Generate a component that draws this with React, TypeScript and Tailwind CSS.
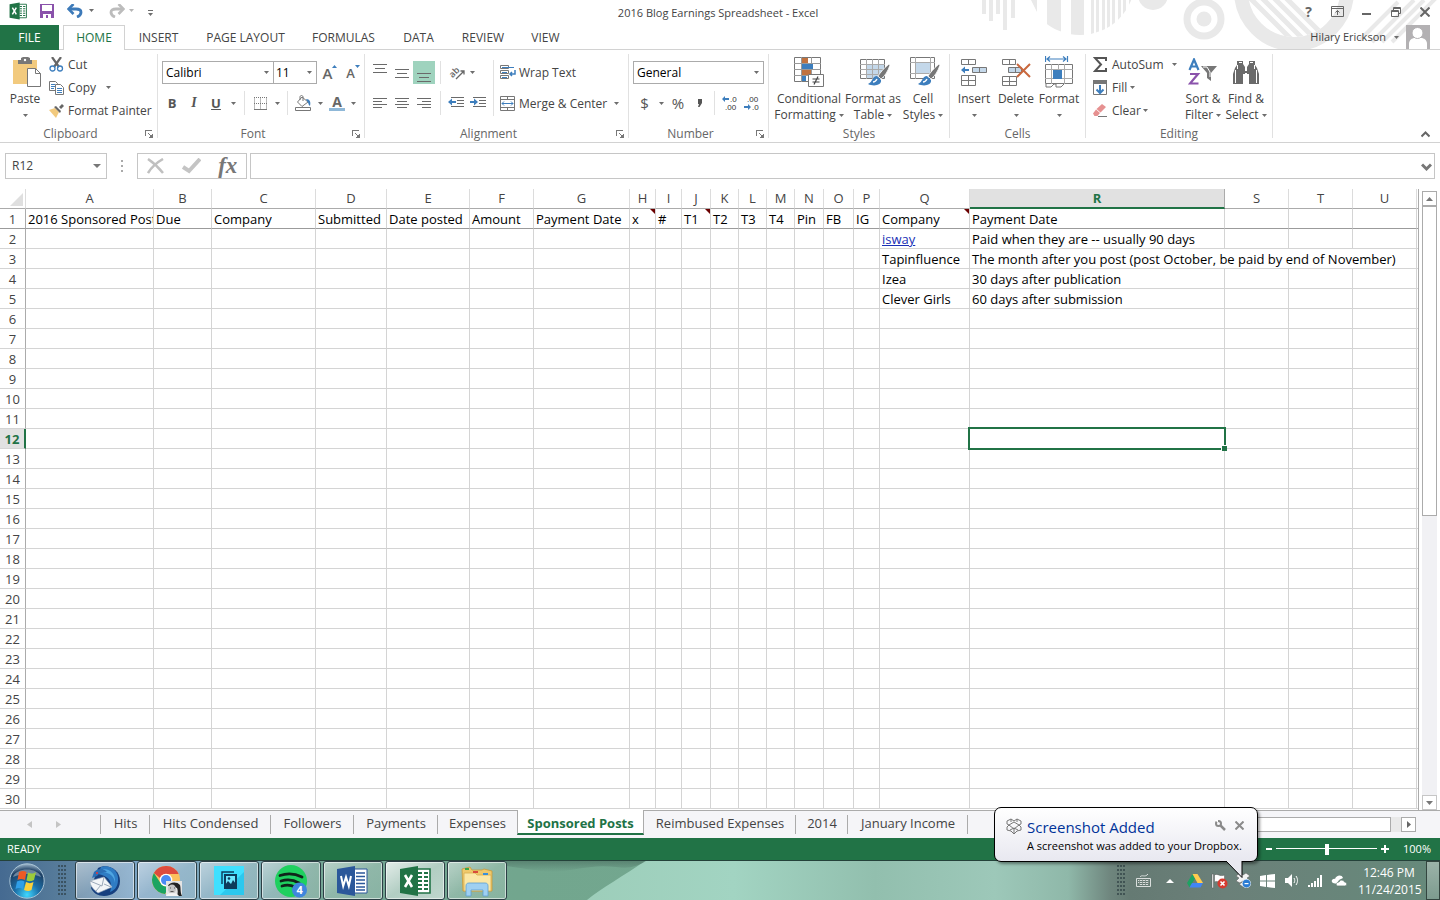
import React from "react";

const COLUMNS = [
  { name: "A", width: 128 },
  { name: "B", width: 58 },
  { name: "C", width: 104 },
  { name: "D", width: 71 },
  { name: "E", width: 83 },
  { name: "F", width: 64 },
  { name: "G", width: 96 },
  { name: "H", width: 26 },
  { name: "I", width: 26 },
  { name: "J", width: 29 },
  { name: "K", width: 28 },
  { name: "L", width: 28 },
  { name: "M", width: 28 },
  { name: "N", width: 29 },
  { name: "O", width: 30 },
  { name: "P", width: 26 },
  { name: "Q", width: 90 },
  { name: "R", width: 255 },
  { name: "S", width: 64 },
  { name: "T", width: 64 },
  { name: "U", width: 64 },
];

const CELLS: Record<string, string> = {
  A1: "2016 Sponsored Post",
  B1: "Due",
  C1: "Company",
  D1: "Submitted",
  E1: "Date posted",
  F1: "Amount",
  G1: "Payment Date",
  H1: "x",
  I1: "#",
  J1: "T1",
  K1: "T2",
  L1: "T3",
  M1: "T4",
  N1: "Pin",
  O1: "FB",
  P1: "IG",
  Q1: "Company",
  R1: "Payment Date",
  Q2: "isway",
  R2: "Paid when they are -- usually 90 days",
  Q3: "Tapinfluence",
  R3: "The month after you post (post October, be paid by end of November)",
  Q4: "Izea",
  R4: "30 days after publication",
  Q5: "Clever Girls",
  R5: "60 days after submission",
};

const COMMENTS = ["H1", "J1", "Q1"];

function Arrow({ className = "" }: { className?: string }) {
  return (
    <svg width="5" height="3" viewBox="0 0 5 3" className={`shrink-0 ${className}`} aria-hidden="true">
      <path d="M0 0h5L2.5 3z" fill="#6d6d6d" />
    </svg>
  );
}

function Sep({ className = "" }: { className?: string }) {
  return (
    <span className={`flex justify-center ${className}`}>
      <span className="h-full w-px bg-[#e1e1e1]" />
    </span>
  );
}

function Btn({
  label,
  className = "",
  children,
}: {
  label?: string;
  className?: string;
  children: React.ReactNode;
}) {
  return (
    <button type="button" aria-label={label} className={`flex items-center justify-center ${className}`}>
      {children}
    </button>
  );
}

function Launcher() {
  return (
    <svg width="8" height="8" viewBox="0 0 8 8" aria-hidden="true" fill="none" stroke="#777" shapeRendering="crispEdges">
      <path d="M.5 6V.5H7M3 3l3 3M7.5 3.5v4h-4" />
      <path d="M4 7h4V4z" fill="#777" stroke="none" />
    </svg>
  );
}

function Group({
  title,
  width,
  launcher = false,
  children,
}: {
  title: string;
  width: string;
  launcher?: boolean;
  children: React.ReactNode;
}) {
  return (
    <section className={`flex shrink-0 flex-col ${width}`} aria-label={title}>
      <div className="flex h-[72px]">{children}</div>
      <div className="flex h-4 items-center text-[#666]">
        <span className="flex-1 text-center">{title}</span>
        {launcher && (
          <button type="button" aria-label={`${title} settings`} className="flex w-4 justify-center">
            <Launcher />
          </button>
        )}
      </div>
    </section>
  );
}

function GroupEdge() {
  return <span className="mb-1 w-px shrink-0 bg-[#e1e1e1]" />;
}

function BigBtn({
  lines,
  width,
  icon,
}: {
  lines: string[];
  width: string;
  icon: React.ReactNode;
}) {
  return (
    <button type="button" className={`flex shrink-0 flex-col items-center whitespace-nowrap leading-4 ${width}`}>
      <span className="flex h-[37px] items-center justify-center pb-px">{icon}</span>
      <span>{lines[0]}</span>
      <span className="flex h-4 items-center gap-[3px]">
        {lines[1]}
        <Arrow />
      </span>
    </button>
  );
}

function SmallBtn({ icon, text, arrow = "" }: { icon: React.ReactNode; text: string; arrow?: string }) {
  return (
    <button type="button" className="flex h-[23px] items-center whitespace-nowrap">
      <span className="flex w-[19px] items-center">{icon}</span>
      {text}
      {arrow && <Arrow className={arrow} />}
    </button>
  );
}

function Lines({ rows }: { rows: [number, number, number][] }) {
  return (
    <svg width="14" height="14" viewBox="0 0 14 14" aria-hidden="true" shapeRendering="crispEdges">
      {rows.map(([x, y, w]) => (
        <rect key={y} x={x} y={y} width={w} height="1" fill="#6a6a6a" />
      ))}
    </svg>
  );
}

function ExcelMark({ size }: { size: number }) {
  return (
    <svg width={size} height={size} viewBox="0 0 32 32" aria-hidden="true">
      <path d="M17 4h14v24H17z" fill="#fff" stroke="#217346" strokeWidth="1.6" />
      <path d="M19 8h4M19 12h4M19 16h4M19 20h4M19 24h4M25 8h4M25 12h4M25 16h4M25 20h4M25 24h4" stroke="#217346" strokeWidth="2" />
      <path d="M1 4 19 1v30L1 28z" fill="#217346" />
      <path d="M6 10l7 12M13 10 6 22" stroke="#fff" strokeWidth="2.6" />
    </svg>
  );
}

function WordMark() {
  return (
    <svg width="32" height="32" viewBox="0 0 32 32" aria-hidden="true">
      <path d="M17 4h13v24H17z" fill="#fff" stroke="#2b579a" />
      <path d="M19 8h9M19 11.500h9M19 15h9M19 18.500h9M19 22h9M19 25h9" stroke="#2b579a" strokeWidth="1.400" />
      <path d="M0 4 18 1v30L0 28z" fill="#2b579a" />
      <path d="M4 11l2.200 10L9 12l2.800 9L14 11" stroke="#fff" strokeWidth="2" fill="none" />
    </svg>
  );
}

function HeaderArt() {
  return (
    <svg
      width="460"
      height="49"
      viewBox="980 0 460 49"
      className="pointer-events-none absolute right-0 top-0"
      aria-hidden="true"
    >
      <defs>
        <clipPath id="disc">
          <circle cx="1080" cy="-20" r="55" />
        </clipPath>
        <clipPath id="ring">
          <circle cx="1294" cy="-9" r="46" />
        </clipPath>
      </defs>
      <g fill="#e9e9e9">
        <path d="M982 0h4v14h-4zM989 0h4v21h-4zM996 0h4v14h-4zM1003 0h4v30h-4zM1011 0h4v18h-4zM1031 0h6v12z" />
        <g clipPath="url(#disc)">
          <path d="M1047 0h14v40h-14zM1071 0h13v40h-13zM1091 0h3v40h-3zM1096 0h3v40h-3zM1102 0h3v40h-3zM1107 0h3v40h-3zM1112 0h3v40h-3zM1118 0h3v40h-3zM1123 0h3v40h-3zM1129 0h3v40h-3z" />
        </g>
        <circle cx="1153" cy="-5" r="15" />
        <circle cx="1204" cy="19" r="7.500" />
      </g>
      <circle cx="1204" cy="19" r="17" fill="none" stroke="#e9e9e9" strokeWidth="7" />
      <circle cx="1294" cy="-9" r="53" fill="none" stroke="#e9e9e9" strokeWidth="14" />
      <g clipPath="url(#ring)" stroke="#e9e9e9" strokeWidth="5">
        <path d="M1240-12l62 62M1252-12l62 62M1264-12l62 62M1276-12l62 62" />
      </g>
      <g stroke="#e9e9e9" strokeWidth="4">
        <path d="M1372 42l42-42M1382 42l42-42M1360 40l38-38M1392 42l44-44" />
      </g>
    </svg>
  );
}

function TitleBar() {
  return (
    <header className="relative">
      <HeaderArt />
      <div className="relative flex h-[25px] items-center">
        <div className="flex flex-1 items-center">
          <span className="ml-[9px] mt-[-3px] w-[31px]">
            <ExcelMark size={18} />
          </span>
          <Btn label="Save" className="w-[14px]">
            <svg width="14" height="14" viewBox="0 0 14 14" aria-hidden="true" className="mt-[-3px]">
              <path d="M0 0h14v14H0z" fill="#8a52ab" />
              <path d="M2 1h10v6H2zM3 10h8v4H8v-3H6v3H3z" fill="#fff" />
            </svg>
          </Btn>
          <Btn label="Undo" className="ml-3 w-[17px]">
            <svg width="16" height="14" viewBox="0 0 16 14" fill="none" stroke="#3d7ab9" aria-hidden="true" className="mt-[-3px]">
              <path d="M2 5h7c7 0 6 6 1 8" strokeWidth="2.800" />
              <path d="M6.500 0L1.500 5l5 5" strokeWidth="2.600" />
            </svg>
          </Btn>
          <Btn label="Undo list" className="ml-[6px]"><Arrow className="mb-1" /></Btn>
          <Btn label="Redo" className="ml-[14px] w-[17px]">
            <svg width="16" height="14" viewBox="0 0 16 14" fill="none" stroke="#bcbcbc" aria-hidden="true" className="mt-[-3px]">
              <path d="M14 5H7C0 5 1 11 6 13" strokeWidth="2.800" />
              <path d="M9.500 0l5 5-5 5" strokeWidth="2.600" />
            </svg>
          </Btn>
          <Btn label="Redo list" className="ml-1 opacity-50"><Arrow className="mb-1" /></Btn>
          <Btn label="Customize toolbar" className="ml-[14px] flex-col gap-[2px]">
            <span className="h-px w-[5px] bg-[#6d6d6d]" />
            <Arrow />
          </Btn>
        </div>
        <h1 className="pl-1 text-[11px] text-[#444]">2016 Blog Earnings Spreadsheet - Excel</h1>
        <div className="flex flex-1 items-center justify-end pb-[2px] pr-2">
          <Btn label="Help" className="w-[29px] text-[14px] font-bold text-[#666]">?</Btn>
          <Btn label="Ribbon display options" className="w-[29px]">
            <svg width="13" height="11" viewBox="0 0 13 11" fill="none" stroke="#666" aria-hidden="true">
              <path d="M.5.5h12v10H.5zM.5 2.500h12M6.500 9V4.500M4.500 6.500l2-2 2 2" />
            </svg>
          </Btn>
          <Btn label="Minimize" className="w-[29px]">
            <svg width="9" height="10" viewBox="0 0 9 10" aria-hidden="true"><path d="M0 6h9v2H0z" fill="#666" /></svg>
          </Btn>
          <Btn label="Restore" className="w-[30px]">
            <svg width="10" height="10" viewBox="0 0 10 10" fill="none" stroke="#666" aria-hidden="true">
              <path d="M.5 3.500h7v6h-7zM.5 4.500h7M2.500 3V.5h7v6H8M2.500 1.500h7" />
            </svg>
          </Btn>
          <Btn label="Close" className="ml-[7px] w-[14px]">
            <svg width="10" height="10" viewBox="0 0 10 10" fill="none" stroke="#666" strokeWidth="2" aria-hidden="true">
              <path d="M.5.5l9 9M9.500.5l-9 9" />
            </svg>
          </Btn>
        </div>
      </div>
      <div className="relative flex h-[25px] items-stretch border-b border-[#d2d2d2] text-[#444]">
        <nav className="-mb-px flex" aria-label="Ribbon tabs">
          <button type="button" className="w-[59px] bg-[#217346] text-white">FILE</button>
          <button type="button" className="ml-1 w-[62px] border border-b-0 border-[#d2d2d2] bg-white text-[#217346]">HOME</button>
          <button type="button" className="w-[67px]">INSERT</button>
          <button type="button" className="w-[107px]">PAGE LAYOUT</button>
          <button type="button" className="w-[89px]">FORMULAS</button>
          <button type="button" className="w-[61px]">DATA</button>
          <button type="button" className="w-[68px]">REVIEW</button>
          <button type="button" className="w-[57px]">VIEW</button>
        </nav>
        <div className="ml-auto flex items-center pr-[10px]">
          <button type="button" className="flex items-center gap-2 text-[11px]">
            Hilary Erickson
            <Arrow />
          </button>
          <svg width="24" height="24" viewBox="0 0 24 24" aria-hidden="true" className="ml-[7px]">
            <path d="M0 0h24v24H0z" fill="#b3b1b3" />
            <path d="M3 24v-5c0-4 3-6 6-6h6c3 0 6 2 6 6v5z" fill="#fff" />
            <circle cx="11.500" cy="8" r="5.500" fill="#fff" stroke="#b3b1b3" />
          </svg>
        </div>
      </div>
    </header>
  );
}

function Brush() {
  return (
    <g>
      <path d="M29 7c-5 4-9 9-11 12l3 3c4-3 7-8 9-14z" fill="#777" stroke="#fff" strokeWidth=".8" />
      <path d="M17 19c-5 0-4 6-9 8 6 3 14 1 13-4z" fill="#3d7ebd" />
      <path d="M13 25c2 0 3-1 4-3" stroke="#fff" strokeWidth="1.400" fill="none" />
    </g>
  );
}

function Ribbon() {
  return (
    <div className="flex h-[93px] border-b border-[#d2d2d2] pt-1 text-[#444]">
      <Group title="Clipboard" width="w-[157px]" launcher>
        <BigBtn
          width="ml-[3px] w-[44px]"
          lines={["Paste", ""]}
          icon={
            <svg width="28" height="30" viewBox="0 0 28 30" aria-hidden="true" className="ml-1">
              <path d="M0 3h24v24H0z" fill="#f2ca7e" />
              <path d="M5 3h3V1l2-1h5l2 1v2h2v4H5z" fill="#777" />
              <circle cx="12" cy="3" r="1.200" fill="#fff" />
              <path d="M14.500 11.500h8l5 5v13h-13z" fill="#fff" stroke="#777" />
              <path d="M22.500 11.500v5h5" fill="none" stroke="#777" />
            </svg>
          }
        />
        <div className="-mt-px ml-[2px] flex flex-col items-start">
          <SmallBtn
            text="Cut"
            icon={
              <svg width="15" height="15" viewBox="0 0 15 15" fill="none" aria-hidden="true">
                <path d="M3 0l7 10M12 0L5 10" stroke="#666" strokeWidth="2.200" />
                <circle cx="3.500" cy="11.500" r="2.500" stroke="#3d7ebd" strokeWidth="1.300" />
                <circle cx="11" cy="11.500" r="2.500" stroke="#3d7ebd" strokeWidth="1.300" />
              </svg>
            }
          />
          <SmallBtn
            text="Copy"
            arrow="ml-[10px]"
            icon={
              <svg width="15" height="14" viewBox="0 0 15 14" aria-hidden="true">
                <path d="M.5.5h6l2 2v7h-8z" fill="#fff" stroke="#777" />
                <path d="M2 3.500h4M2 5.500h4M2 7.500h3" stroke="#3d7ebd" />
                <path d="M6.500 3.500h5l3 3v7h-8z" fill="#fff" stroke="#777" />
                <path d="M8 7.500h5M8 9.500h5M8 11.500h5" stroke="#3d7ebd" />
              </svg>
            }
          />
          <SmallBtn
            text="Format Painter"
            icon={
              <svg width="15" height="14" viewBox="0 0 15 14" aria-hidden="true">
                <path d="M0 6l6-2 4 4-3 6z" fill="#f2ca7e" />
                <path d="M5 3l2-1 5 5-1 2zM10 3l3-3 2 2-3 3z" fill="#666" />
              </svg>
            }
          />
        </div>
      </Group>
      <GroupEdge />

      <Group title="Font" width="w-[206px]" launcher>
        <div className="ml-1 flex flex-col pt-[7px]">
          <div className="flex h-[23px] items-stretch">
            <span className="relative flex">
              <select aria-label="Font name" className="w-[112px] appearance-none border border-[#ababab] bg-white pl-[3px] text-black">
                <option>Calibri</option>
              </select>
              <Arrow className="absolute right-[5px] top-[10px]" />
            </span>
            <span className="relative -ml-px flex">
              <select aria-label="Font size" className="w-[44px] appearance-none border border-[#ababab] bg-white pl-[2px] text-black">
                <option>11</option>
              </select>
              <Arrow className="absolute right-[5px] top-[10px]" />
            </span>
            <Btn label="Grow font" className="ml-px w-6">
              <span className="text-[15px] font-semibold text-[#666]">A</span>
              <svg width="5" height="3" viewBox="0 0 5 3" className="-mt-3" aria-hidden="true"><path d="M2.500 0L5 3H0z" fill="#3d7ebd" /></svg>
            </Btn>
            <Btn label="Shrink font" className="w-[22px]">
              <span className="text-[13px] font-semibold text-[#666]">A</span>
              <svg width="5" height="3" viewBox="0 0 5 3" className="-mt-3" aria-hidden="true"><path d="M2.500 3L5 0H0z" fill="#3d7ebd" /></svg>
            </Btn>
          </div>
          <div className="-ml-px mt-[7px] flex h-6 items-stretch">
            <Btn label="Bold" className="w-[22px] text-[13px] font-bold text-[#555]">B</Btn>
            <Btn label="Italic" className="w-[22px] font-['Liberation_Serif',serif] text-[14px] font-bold italic text-[#555]">I</Btn>
            <Btn label="Underline" className="w-[22px] text-[13px] font-bold text-[#555] underline">U</Btn>
            <Btn label="Underline styles" className="w-3"><Arrow /></Btn>
            <Sep className="w-[10px]" />
            <Btn label="Borders" className="w-[22px]">
              <svg width="13" height="13" viewBox="0 0 13 13" aria-hidden="true" fill="none" stroke="#777">
                <path d="M.5.500v12M12.500.500v12M6.500.500v12M0 .5h13M0 6.500h13" strokeDasharray="1 1" />
                <path d="M0 12.500h13" />
              </svg>
            </Btn>
            <Btn label="Border styles" className="w-3"><Arrow /></Btn>
            <Sep className="w-2" />
            <Btn label="Fill color" className="w-6">
              <svg width="17" height="16" viewBox="0 0 17 16" aria-hidden="true" fill="none">
                <path d="M7 2l6 5-6 4.500L2.500 7zM5 5V2c0-2 3-2 3 0v4" stroke="#777" />
                <path d="M11 4c4 0 5 3 4 7-2-1-1-3-3-5z" fill="#3d7ebd" />
                <path d="M.5 12.500h15v3H.5z" stroke="#777" fill="#fff" />
              </svg>
            </Btn>
            <Btn label="Fill colors" className="w-[10px]"><Arrow /></Btn>
            <Btn label="Font color" className="w-6 flex-col">
              <span className="text-[14px] font-bold leading-3 text-[#666]">A</span>
              <span className="h-[3px] w-4 bg-[#8fb8d8]" />
            </Btn>
            <Btn label="Font colors" className="w-2"><Arrow /></Btn>
          </div>
        </div>
      </Group>
      <GroupEdge />

      <Group title="Alignment" width="w-[263px]" launcher>
        <div className="ml-1 flex flex-col pt-[7px]">
          <div className="flex h-[23px]">
            <Btn label="Top align" className="w-[22px] pb-[5px]"><Lines rows={[[0, 1, 14], [2, 5, 10], [0, 9, 14]]} /></Btn>
            <Btn label="Middle align" className="w-[22px]"><Lines rows={[[0, 3, 14], [2, 7, 10], [0, 11, 14]]} /></Btn>
            <Btn label="Bottom align" className="w-[22px] bg-[#9fd3be] pt-1"><Lines rows={[[0, 5, 14], [2, 9, 10], [0, 13, 14]]} /></Btn>
            <Sep className="w-[10px]" />
            <Btn label="Orientation" className="w-8 gap-1">
              <svg width="19" height="19" viewBox="-2 -2 19 19" aria-hidden="true">
                <text x="1" y="11" fontSize="9" fontWeight="600" fill="#666" transform="rotate(-45 5 9)">ab</text>
                <path d="M7 14l8-8M11.500 6H15v3.500" stroke="#666" fill="none" strokeWidth="1.300" />
              </svg>
              <Arrow />
            </Btn>
          </div>
          <div className="mt-[7px] flex h-6">
            <Btn label="Align left" className="w-[22px]"><Lines rows={[[0, 2, 14], [0, 5, 9], [0, 8, 14], [0, 11, 9]]} /></Btn>
            <Btn label="Center" className="w-[22px]"><Lines rows={[[0, 2, 14], [2, 5, 10], [0, 8, 14], [2, 11, 10]]} /></Btn>
            <Btn label="Align right" className="w-[22px]"><Lines rows={[[0, 2, 14], [5, 5, 9], [0, 8, 14], [5, 11, 9]]} /></Btn>
            <Sep className="w-[10px]" />
            <Btn label="Decrease indent" className="w-[22px]">
              <svg width="16" height="12" viewBox="0 0 16 12" aria-hidden="true" fill="none">
                <path d="M3 .500h13M9 3.500h7M9 6.500h7M3 9.500h13" stroke="#6a6a6a" />
                <path d="M0 5l4-3.500v2.500h4v2H4v2.500z" fill="#3d7ebd" />
              </svg>
            </Btn>
            <Btn label="Increase indent" className="w-[22px]">
              <svg width="16" height="12" viewBox="0 0 16 12" aria-hidden="true" fill="none">
                <path d="M3 .500h13M9 3.500h7M9 6.500h7M3 9.500h13" stroke="#6a6a6a" />
                <path d="M8 5L4 1.500v2.500H0v2h4v2.500z" fill="#3d7ebd" />
              </svg>
            </Btn>
          </div>
        </div>
        <Sep className="mb-[10px] mt-[6px] w-[9px]" />
        <div className="ml-[2px] flex flex-col items-start pt-[7px]">
          <SmallBtn
            text="Wrap Text"
            icon={
              <svg width="16" height="15" viewBox="0 0 16 15" aria-hidden="true" fill="none">
                <path d="M.5.500h8v3h-8zM.5 5.500h8v3h-8zM.5 10.500h8v3h-8z" stroke="#777" />
                <path d="M2 2.500h12M2 7.500h5M2 12.500h5" stroke="#3d7ebd" />
                <path d="M15 5v4h-5M12 7l-2 2 2 2" stroke="#3d7ebd" strokeWidth="1.500" />
              </svg>
            }
          />
          <span className="mt-2 flex">
            <SmallBtn
              text="Merge & Center"
              arrow="ml-[7px]"
              icon={
                <svg width="15" height="15" viewBox="0 0 15 15" aria-hidden="true" fill="none">
                  <path d="M.5.500h14v14H.5zM.5 3.500h14M.5 11.500h14M7.500.500v3M7.500 11.500v3" stroke="#777" />
                  <path d="M2 7.500h11M4 5.500l-2 2 2 2M11 5.500l2 2-2 2" stroke="#3d7ebd" />
                </svg>
              }
            />
          </span>
        </div>
      </Group>
      <GroupEdge />

      <Group title="Number" width="w-[139px]" launcher>
        <div className="ml-1 flex flex-col pt-[7px]">
          <span className="relative flex h-[23px]">
            <select aria-label="Number format" className="w-[131px] appearance-none border border-[#ababab] bg-white pl-[3px] text-black">
              <option>General</option>
            </select>
            <Arrow className="absolute right-[5px] top-[10px]" />
          </span>
          <div className="mt-[7px] flex h-6">
            <Btn label="Currency" className="w-[23px] text-[15px] text-[#555]">$</Btn>
            <Btn label="Currency list" className="w-[10px]"><Arrow /></Btn>
            <Btn label="Percent" className="ml-px w-[22px] text-[15px] text-[#555]">%</Btn>
            <Btn label="Comma style" className="w-5">
              <svg width="5" height="8" viewBox="0 0 5 8" aria-hidden="true"><path d="M1 0h4v4L2.500 8H1l1-3H1z" fill="#555" /></svg>
            </Btn>
            <Sep className="w-[10px]" />
            <Btn label="Increase decimal" className="w-[22px]">
              <svg width="18" height="20" viewBox="0 0 18 20" aria-hidden="true" fontFamily="Liberation Sans">
                <text x="9" y="9" fontSize="8" fill="#333">.0</text>
                <text x="4" y="17" fontSize="8" fill="#333">.00</text>
                <path d="M1 6l3-3v2h4v2H4v2z" fill="#3d7ebd" />
              </svg>
            </Btn>
            <Btn label="Decrease decimal" className="w-[22px]">
              <svg width="18" height="20" viewBox="0 0 18 20" aria-hidden="true" fontFamily="Liberation Sans">
                <text x="4" y="9" fontSize="8" fill="#333">.00</text>
                <text x="9" y="17" fontSize="8" fill="#333">.0</text>
                <path d="M8 14l-3-3v2H1v2h4v2z" fill="#3d7ebd" />
              </svg>
            </Btn>
          </div>
        </div>
      </Group>
      <GroupEdge />

      <Group title="Styles" width="w-[180px]">
        <BigBtn
          width="ml-[5px] w-[70px]"
          lines={["Conditional", "Formatting"]}
          icon={
            <svg width="30" height="30" viewBox="0 0 30 30" aria-hidden="true">
              <path d="M.5.500h26v24H.5z" fill="#fff" stroke="#777" />
              <path d="M7.500 0v25M17.500 0v25M0 6.500h27M0 12.500h27M0 18.500h27" stroke="#999" />
              <path d="M8 1h6v5H8zM8 13h9v5H8z" fill="#c0723f" />
              <path d="M8 7h11v5H8zM8 19h4v5H8z" fill="#3d7ebd" />
              <path d="M14.500 17.500h15v12h-15z" fill="#fff" stroke="#777" />
              <path d="M18.500 22h7M18.500 25h7M24 19.500l-4 8" stroke="#444" strokeWidth="1.200" />
            </svg>
          }
        />
        <BigBtn
          width="w-[58px]"
          lines={["Format as", "Table"]}
          icon={
            <svg width="30" height="30" viewBox="0 0 30 30" aria-hidden="true" className="ml-1">
              <path d="M.5 2.500h24v19H.5z" fill="#fff" stroke="#777" />
              <path d="M7 8h17v13H7z" fill="#c4d8ea" />
              <path d="M6.500 2v20M12.500 2v20M18.500 2v20M0 7.500h25M0 12.500h25M0 17.500h25" stroke="#aaa" />
              <Brush />
            </svg>
          }
        />
        <BigBtn
          width="w-[42px]"
          lines={["Cell", "Styles"]}
          icon={
            <svg width="30" height="30" viewBox="0 0 30 30" aria-hidden="true" className="ml-1">
              <path d="M.5.500h24v21H.5z" fill="#fff" stroke="#777" />
              <path d="M5.500 0v22M20.500 0v22M0 5.500h25M0 16.500h25" stroke="#aaa" />
              <path d="M6 6h14v10H6z" fill="#c4d8ea" />
              <Brush />
            </svg>
          }
        />
      </Group>
      <GroupEdge />

      <Group title="Cells" width="w-[135px]">
        <BigBtn
          width="ml-[3px] w-[42px]"
          lines={["Insert", ""]}
          icon={
            <svg width="28" height="30" viewBox="0 0 28 30" aria-hidden="true" fill="none" stroke="#777">
              <path d="M1.500 2.500h14v5h-14zM8.500 2.500v5M1.500 18.500h14v10h-14zM8.500 18.500v10M1.500 23.500h14" />
              <path d="M12.500 10.500h14v5h-14zM19.500 10.500v5" fill="#c4d8ea" />
              <path d="M1 13l4-3.500V12h4v2H5v2.500z" fill="#3d7ebd" stroke="none" />
            </svg>
          }
        />
        <BigBtn
          width="w-[42px]"
          lines={["Delete", ""]}
          icon={
            <svg width="30" height="30" viewBox="0 0 30 30" aria-hidden="true" fill="none" stroke="#777">
              <path d="M1.500 2.500h13v5h-13zM8.500 2.500v5M1.500 19.500h14v9h-14zM8.500 19.500v9M1.500 24.500h14" />
              <path d="M7.500 10.500h13v5h-13zM14.500 10.500v5" fill="#c4d8ea" />
              <path d="M16 7l13 13M29 7L16 20" stroke="#c9683e" strokeWidth="2" />
            </svg>
          }
        />
        <BigBtn
          width="w-[44px]"
          lines={["Format", ""]}
          icon={
            <svg width="28" height="32" viewBox="0 0 28 32" aria-hidden="true" fill="none">
              <path d="M.5 0v6M22.500 0v6M2 3h19M5 .5L2 3l3 2.500M18 .5L21 3l-3 2.500" stroke="#3d7ebd" strokeWidth="1.200" />
              <path d="M.5 8.500h27v19H.5z" fill="#fff" stroke="#777" />
              <path d="M6.500 8v20M19.500 8v20M13.500 8v6M0 13.500h28M0 22.500h28" stroke="#aaa" />
              <path d="M8 14h9v9H8z" fill="#3d7ebd" />
              <path d="M1 28v3h5l3-3h2v3h5l3-3" stroke="#777" />
            </svg>
          }
        />
      </Group>
      <GroupEdge />

      <Group title="Editing" width="w-[186px]">
        <div className="-mt-px ml-[7px] flex w-[90px] flex-col items-start">
          <SmallBtn
            text="AutoSum"
            arrow="ml-2"
            icon={
              <svg width="15" height="15" viewBox="0 0 15 15" aria-hidden="true">
                <path d="M13 4V1H2l6 6.500L2 14h11v-3" fill="none" stroke="#555" strokeWidth="2" />
              </svg>
            }
          />
          <SmallBtn
            text="Fill"
            arrow="ml-[3px]"
            icon={
              <svg width="14" height="15" viewBox="0 0 14 15" aria-hidden="true">
                <path d="M.5.500h13v14H.5z" fill="#fff" stroke="#777" />
                <path d="M0 0h14v4H0z" fill="#777" />
                <path d="M7 5v8M3.500 9.500L7 13l3.500-3.500" stroke="#3d7ebd" strokeWidth="2" fill="none" />
              </svg>
            }
          />
          <SmallBtn
            text="Clear"
            arrow="ml-[2px]"
            icon={
              <svg width="14" height="13" viewBox="0 0 14 13" aria-hidden="true">
                <path d="M9 0l4 3-5.500 5.500-4-3.500zM3 5.500l4 3.500-2.500 3H1.500L0 9.500z" fill="#e69191" />
                <path d="M5 12.500h9" stroke="#777" />
              </svg>
            }
          />
        </div>
        <BigBtn
          width="w-[40px]"
          lines={["Sort &", "Filter"]}
          icon={
            <svg width="30" height="28" viewBox="0 0 30 28" aria-hidden="true" fill="none">
              <path d="M1.500 12L6 1.500 10.500 12M3 8.500h6" stroke="#3d7ebd" strokeWidth="2.200" />
              <path d="M2 16h8L2 25.500h8.500" stroke="#8a52ab" strokeWidth="2.200" />
              <path d="M13 8h16l-6 7v8l-4-3v-5z" fill="#777" />
              <path d="M15 9h4l3 5v5" stroke="#fff" />
            </svg>
          }
        />
        <BigBtn
          width="ml-px w-[44px]"
          lines={["Find &", "Select"]}
          icon={
            <svg width="28" height="26" viewBox="0 0 28 26" aria-hidden="true" fill="#6a6a6a">
              <path d="M5 2h6v3l2 3v4h2V8l2-3V2h6v4l2 3 2 6v10H17V15h-6v10H1V15l2-6 2-3z" />
              <path d="M3.500 11v13M5.500 6v4M24.500 11v13M22.500 6v4M7 3.500h3M18 3.500h3M13 14.500h2" stroke="#fff" fill="none" />
            </svg>
          }
        />
      </Group>
      <GroupEdge />
      <button type="button" aria-label="Collapse ribbon" className="ml-auto mr-[10px] mt-auto pb-1">
        <svg width="9" height="7" viewBox="0 0 9 7" fill="none" stroke="#666" strokeWidth="2" aria-hidden="true">
          <path d="M.5 5.500l4-4 4 4" />
        </svg>
      </button>
    </div>
  );
}

function FormulaBar() {
  return (
    <div className="flex h-[46px] items-start pl-[5px] pr-[5px] pt-[10px] text-[#444]">
      <button type="button" aria-label="Name box" className="flex h-[26px] w-[102px] items-center justify-between border border-[#c6c6c6] pl-[6px] pr-[5px]">
        R12
        <svg width="8" height="4" viewBox="0 0 8 4" aria-hidden="true"><path d="M0 0h8L4 4z" fill="#777" /></svg>
      </button>
      <span className="flex h-[26px] w-[30px] flex-col items-center justify-center gap-[3px]">
        <span className="size-[2px] bg-[#aaa]" />
        <span className="size-[2px] bg-[#aaa]" />
        <span className="size-[2px] bg-[#aaa]" />
      </span>
      <div className="flex h-[26px] w-[110px] items-center justify-around border border-[#c6c6c6]">
        <Btn label="Cancel">
          <svg width="18" height="16" viewBox="0 0 18 16" fill="none" stroke="#c0c0c0" strokeWidth="2.500" aria-hidden="true"><path d="M1 1c6 4 11 9 15 14M16 1C9 5 4 10 1 15" /></svg>
        </Btn>
        <Btn label="Enter">
          <svg width="19" height="16" viewBox="0 0 19 16" fill="none" stroke="#c4c4c4" strokeWidth="4" aria-hidden="true"><path d="M1 9l6 4L18 1" /></svg>
        </Btn>
        <Btn label="Insert function" className="font-['Liberation_Serif',serif] text-[23px] font-bold italic leading-6 text-[#777]">fx</Btn>
      </div>
      <div className="ml-[3px] flex h-[26px] flex-1 items-center border border-[#c6c6c6] pr-[2px]">
        <input aria-label="Formula" className="h-full min-w-0 flex-1 px-1 outline-none" />
        <Btn label="Expand formula bar">
          <svg width="11" height="9" viewBox="0 0 11 9" fill="none" stroke="#777" strokeWidth="3" aria-hidden="true" className="mt-[3px]"><path d="M1 1.500L5.500 6 10 1.500" /></svg>
        </Btn>
      </div>
    </div>
  );
}

function Sheet() {
  const rows = Array.from({ length: 30 }, (_, i) => i + 1);
  return (
    <main className="flex flex-1">
      <div className="min-w-0 flex-1 overflow-hidden border-r border-[#ababab]">
        <table className="w-full table-fixed border-separate border-spacing-0">
          <colgroup>
            <col style={{ width: 26 }} />
            {COLUMNS.map((c) => (
              <col key={c.name} style={{ width: c.width }} />
            ))}
            <col />
          </colgroup>
          <thead>
            <tr className="h-5 text-[13px] leading-[19px] text-[#444]">
              <td className="border-b border-r border-b-[#ababab] border-r-[#dcdcdc] p-0">
                <svg width="13" height="13" viewBox="0 0 13 13" className="ml-auto mr-[2px] mt-[2px]" aria-hidden="true"><path d="M13 0v13H0z" fill="#dfdfdf" /></svg>
              </td>
              {COLUMNS.map((c) =>
                c.name === "R" ? (
                  <th key="R" scope="col" className="border-b-2 border-r border-b-[#217346] border-r-[#ababab] bg-[#e1e1e1] p-0 font-bold leading-[18px] text-[#217346]">
                    R
                  </th>
                ) : (
                  <th key={c.name} scope="col" className="border-b border-r border-b-[#ababab] border-r-[#dcdcdc] p-0 font-normal">
                    {c.name}
                  </th>
                ),
              )}
              <td className="border-b border-[#ababab] p-0" />
            </tr>
          </thead>
          <tbody>
            {rows.map((r) => {
              const line = r === 1 ? "border-b-[#9b9b9b]" : "border-b-[#d4d4d4]";
              return (
                <tr key={r} className="h-5">
                  <th
                    scope="row"
                    className={
                      r === 12
                        ? "border-b border-r-2 border-b-[#d4d4d4] border-r-[#217346] bg-[#e1e1e1] px-0 pb-0 pt-[2px] text-[13px] font-bold leading-[17px] text-[#217346]"
                        : `border-b border-r border-r-[#ababab] px-0 pb-0 pt-[2px] text-[13px] font-normal leading-[17px] text-[#444] ${line}`
                    }
                  >
                    {r}
                  </th>
                  {COLUMNS.filter((c) => !(r === 3 && "STU".includes(c.name))).map((c) => {
                    const key = c.name + r;
                    const text = CELLS[key];
                    return (
                      <td
                        key={key}
                        colSpan={key === "R3" ? 4 : 1}
                        className={`relative border-b border-r border-r-[#d4d4d4] px-0 pb-0 pt-[2px] text-[13px] leading-[17px] text-black ${line}`}
                      >
                        {text && (
                          <div className="overflow-hidden whitespace-nowrap pl-[2px]">
                            {key === "Q2" ? (
                              <a href="#isway" className="text-[#1a2fb5] underline">{text}</a>
                            ) : (
                              text
                            )}
                          </div>
                        )}
                        {COMMENTS.includes(key) && (
                          <svg width="5" height="5" viewBox="0 0 5 5" className="absolute right-0 top-0" aria-hidden="true"><path d="M0 0h5v5z" fill="#6b0000" /></svg>
                        )}
                        {key === "R12" && (
                          <div className="absolute -bottom-[2px] -left-[2px] -right-[2px] -top-[2px] z-10 border-2 border-[#217346]">
                            <span className="absolute -bottom-[3px] -right-[3px] size-[6px] border-l border-t border-white bg-[#217346]" />
                          </div>
                        )}
                      </td>
                    );
                  })}
                  <td className={`border-b p-0 ${line}`} />
                </tr>
              );
            })}
          </tbody>
        </table>
      </div>
      <div className="flex w-[21px] flex-col items-center pt-[2px]">
        <button type="button" aria-label="Scroll up" className="flex size-[15px] items-center justify-center border border-[#ababab]">
          <svg width="7" height="4" viewBox="0 0 7 4" aria-hidden="true"><path d="M3.500 0L7 4H0z" fill="#777" /></svg>
        </button>
        <div className="h-[310px] w-[15px] border border-[#ababab]" />
        <div className="w-[15px] flex-1 bg-[#f1f1f4]" />
        <button type="button" aria-label="Scroll down" className="flex size-[15px] items-center justify-center border border-[#c6c6c6] bg-white">
          <svg width="7" height="4" viewBox="0 0 7 4" aria-hidden="true"><path d="M3.500 4L7 0H0z" fill="#777" /></svg>
        </button>
      </div>
    </main>
  );
}

function SheetTabs() {
  const before = [
    { name: "Hits", width: "w-[49px]" },
    { name: "Hits Condensed", width: "w-[121px]" },
    { name: "Followers", width: "w-[83px]" },
    { name: "Payments", width: "w-[84px]" },
  ];
  const after = [
    { name: "Reimbused Expenses", width: "w-[152px]" },
    { name: "2014", width: "w-[52px]" },
    { name: "January Income", width: "w-[120px]" },
  ];
  const divider = <span className="my-1 w-px bg-[#ababab]" />;
  return (
    <div className="flex h-7 items-stretch bg-[#f5f5f8] text-[13px] text-[#444]">
      <div className="flex w-[100px] items-center gap-6 border-t border-[#ababab] pl-[27px]">
        <Btn label="Previous sheet"><svg width="5" height="7" viewBox="0 0 5 7" aria-hidden="true"><path d="M5 0v7L0 3.500z" fill="#c4c4c4" /></svg></Btn>
        <Btn label="Next sheet"><svg width="5" height="7" viewBox="0 0 5 7" aria-hidden="true"><path d="M0 0v7l5-3.500z" fill="#c4c4c4" /></svg></Btn>
      </div>
      <div className="flex border-t border-[#ababab]">
        {divider}
        {before.map((t) => (
          <React.Fragment key={t.name}>
            <button type="button" className={`-mr-px whitespace-nowrap pb-[3px] ${t.width}`}>{t.name}</button>
            {divider}
          </React.Fragment>
        ))}
        <button type="button" className="w-[79px] pb-[3px]">Expenses</button>
      </div>
      <button type="button" className="mb-[3px] w-[127px] whitespace-nowrap border-x border-b-2 border-x-[#ababab] border-b-[#217346] bg-white pt-[3px] font-bold text-[#217346]">
        Sponsored Posts
      </button>
      <div className="flex flex-1 border-t border-[#ababab]">
        {after.map((t) => (
          <React.Fragment key={t.name}>
            <button type="button" className={`-mr-px whitespace-nowrap pb-[3px] ${t.width}`}>{t.name}</button>
            {divider}
          </React.Fragment>
        ))}
        <div className="ml-auto flex items-center pr-6">
          <div className="h-[15px] w-[240px] border border-[#ababab] bg-white" />
          <span className="h-[15px] w-[10px] bg-[#e9e9e9]" />
          <button type="button" aria-label="Scroll right" className="flex size-[15px] items-center justify-center border border-[#ababab] bg-white">
            <svg width="4" height="7" viewBox="0 0 4 7" aria-hidden="true"><path d="M0 0v7l4-3.500z" fill="#666" /></svg>
          </button>
        </div>
      </div>
    </div>
  );
}

function StatusBar() {
  return (
    <div className="flex h-[22px] items-center bg-[#217346] pl-[7px] pr-[9px] text-[11px] text-white">
      <span>READY</span>
      <div className="ml-auto flex items-center">
        <Btn label="Zoom out"><span className="h-[2px] w-[6px] bg-white" /></Btn>
        <label className="relative ml-1 flex h-3 w-[101px] items-center">
          <span className="absolute left-0 right-0 top-[5px] h-px bg-white" />
          <input
            type="range"
            aria-label="Zoom"
            defaultValue={50}
            className="relative h-3 w-full appearance-none bg-transparent [&::-webkit-slider-thumb]:h-[11px] [&::-webkit-slider-thumb]:w-1 [&::-webkit-slider-thumb]:appearance-none [&::-webkit-slider-thumb]:bg-white"
          />
        </label>
        <Btn label="Zoom in" className="ml-1">
          <svg width="8" height="8" viewBox="0 0 8 8" aria-hidden="true"><path d="M3 0h2v3h3v2H5v3H3V5H0V3h3z" fill="#fff" /></svg>
        </Btn>
        <span className="ml-[14px]">100%</span>
      </div>
    </div>
  );
}

function Grip() {
  return (
    <svg width="9" height="31" viewBox="0 0 9 31" aria-hidden="true">
      {Array.from({ length: 8 }, (_, i) => (
        <path key={i} d={`M0 ${i * 4}h2v2H0zM3 ${i * 4}h2v2H3zM6 ${i * 4}h2v2H6z`} fill="#26373c" opacity=".6" />
      ))}
    </svg>
  );
}

function TaskButton({ label, active = false, children }: { label: string; active?: boolean; children: React.ReactNode }) {
  return (
    <button
      type="button"
      aria-label={label}
      className={`flex h-[39px] w-[60px] shrink-0 items-center justify-center rounded-[3px] border border-[#2c3f45] shadow-[inset_0_0_0_1px_rgba(255,255,255,0.55)] ${
        active
          ? "bg-linear-to-br from-white/80 via-white/45 to-white/55"
          : "bg-linear-to-br from-white/50 via-white/20 to-white/15"
      }`}
    >
      {children}
    </button>
  );
}

function TaskbarGlass() {
  return (
    <svg
      viewBox="0 0 1440 39"
      preserveAspectRatio="none"
      className="pointer-events-none absolute inset-0 h-full w-full"
      aria-hidden="true"
    >
      <defs>
        <linearGradient id="glass">
          <stop offset="0" stopColor="#9dceba" />
          <stop offset=".28" stopColor="#a2d4c2" />
          <stop offset=".55" stopColor="#92bfae" />
          <stop offset=".78" stopColor="#9dc8b9" />
          <stop offset=".92" stopColor="#8fb8a9" />
          <stop offset="1" stopColor="#6f867e" />
        </linearGradient>
        <linearGradient id="shade" x2="0" y2="1">
          <stop offset="0" stopColor="#3c5a50" stopOpacity=".45" />
          <stop offset="1" stopColor="#3c5a50" stopOpacity="0" />
        </linearGradient>
      </defs>
      <path d="M645 0C625 14 600 28 587 39H1110V0z" fill="url(#glass)" />
      <path d="M506 0h140c-8 5-16 8-30 6-30-4-50 8-76 4-14-2-26-4-34-5z" fill="url(#shade)" />
    </svg>
  );
}

function Taskbar() {
  return (
    <footer className="relative flex h-10 items-stretch border-t border-[#24423a] bg-[linear-gradient(90deg,#456a91_0,#5a7f9c_5%,#7ba3c4_9%,#7ba7b8_16%,#74a595_22%,#72a68e_36%,#74a890_60%,#6f867e_77%,#657a73_78.500%,#6b8079_85%,#668a7b_100%)]">
      <TaskbarGlass />
      <div className="relative flex items-center pl-[9px]">
        <Btn label="Start">
          <svg width="36" height="36" viewBox="0 0 36 36" aria-hidden="true">
            <defs>
              <radialGradient id="orb" cx=".5" cy=".9" r=".9">
                <stop offset="0" stopColor="#3fd8ff" />
                <stop offset=".4" stopColor="#1c6fa8" />
                <stop offset=".8" stopColor="#1d3f63" />
                <stop offset="1" stopColor="#9fb9cd" />
              </radialGradient>
            </defs>
            <circle cx="18" cy="18" r="17.200" fill="url(#orb)" stroke="#a9c4d6" />
            <path d="M4 14C7 4 29 4 32 14c-9-4-19-4-28 0z" fill="#fff" opacity=".35" />
            <path d="M10 9c3-1.500 5-1.500 7.500 0L16 17c-3-1.500-5-1.500-7.500 0z" fill="#ee5a24" />
            <path d="M19 9.500c3 1.500 5 1.500 8-.5l-2 8c-3 1.500-5 1.500-7.500.5z" fill="#9ccb3b" />
            <path d="M8 18.500c3-1.500 5-1.500 7.500 0L14 26c-3-1.500-5-1.500-7.500 0z" fill="#2f9fe8" />
            <path d="M17 19c3 1.500 5 1.500 7.500 0l-2 8c-2.500 1.500-5 1-7.500 0z" fill="#fcd03a" />
          </svg>
        </Btn>
        <span className="ml-[13px]"><Grip /></span>
      </div>
      <div className="relative flex gap-[2px] pl-2">
        <TaskButton label="Thunderbird">
          <svg width="32" height="32" viewBox="0 0 32 32" aria-hidden="true">
            <path d="M9 3C18-2 31 4 31 16c0 10-8 15-16 15-6 0-11-3-13-8z" fill="#17407f" />
            <path d="M12 2c9-3 18 4 17 13 0 8-5 11-8 12 3-9 0-16-12-18z" fill="#2f7cc4" />
            <path d="M14 4c8 0 13 6 12 14-1-7-5-10-12-11z" fill="#4fa6e2" />
            <path d="M5 7c4-4 10-4 13 0-4 0-8 1-10 4l-5 2z" fill="#2b6fb5" />
            <path d="M1 16l14-4 8 10-14 6c-4-3-8-7-8-12z" fill="#f3f5f8" stroke="#9ab" strokeWidth=".6" />
            <path d="M1 16l12 5 2-9M7 26l5-6M22 22l-7-3" fill="none" stroke="#9aa8b8" />
            <circle cx="8" cy="8" r="1" fill="#e33" />
          </svg>
        </TaskButton>
        <TaskButton label="Chrome">
          <svg width="32" height="32" viewBox="0 0 32 32" aria-hidden="true">
            <circle cx="15" cy="15" r="14" fill="#fbc15e" />
            <path d="M2.900 8A14 14 0 0 1 27.600 9H15a6.500 6.500 0 0 0-6 4z" fill="#dd4b3e" />
            <path d="M2.900 8A14 14 0 0 0 14 29l5-8.500c-4 2-8 .5-9.500-2.500z" fill="#1ba462" />
            <circle cx="15" cy="15" r="6.300" fill="#fff" />
            <circle cx="15" cy="15" r="5" fill="#4a8af4" />
            <path d="M15 16h16v15H15z" fill="#e4e4e4" />
            <path d="M17 21c1-4 9-5 12-1 1 3 0 7 2 11h-5c1-3 1-6 0-8-3-2-6-1-9-2z" fill="#222" />
            <ellipse cx="21" cy="24" rx="4" ry="4.500" fill="#c4c4c4" />
            <path d="M19 23h1M23 23h1M19.500 26.500h3" stroke="#555" />
            <path d="M15 31c1-2 3-3 6-3s6 1 7 3z" fill="#f4f4f4" />
          </svg>
        </TaskButton>
        <TaskButton label="Photo gallery">
          <svg width="30" height="30" viewBox="0 0 30 30" aria-hidden="true">
            <path d="M0 0h30v29H0z" fill="#3fe0ff" />
            <path d="M30 6v23H6z" fill="#2cc8ee" />
            <path d="M8 18V6h12" fill="none" stroke="#0d3c5c" strokeWidth="1.400" />
            <path d="M11 9h11v13H11z" fill="#6fe8ff" stroke="#0d3c5c" strokeWidth="2" />
            <path d="M11 19l3-4 3 3 2-4 3 4v4H11z" fill="#0d3c5c" />
            <circle cx="15" cy="12.500" r="1.300" fill="#0d3c5c" />
          </svg>
        </TaskButton>
        <TaskButton label="Spotify">
          <svg width="34" height="34" viewBox="0 0 34 34" aria-hidden="true">
            <circle cx="17" cy="17" r="16" fill="#1fd05f" />
            <path d="M6 11.500c7-2.500 15-2 22 1.500M7 17c6-2 13-1 18 2M8 22c5-1.500 10-.5 13 1" fill="none" stroke="#10241a" strokeWidth="2.800" strokeLinecap="round" />
            <circle cx="25.500" cy="26" r="7.500" fill="#3f86dd" />
            <text x="22.500" y="30" fontSize="11" fontWeight="700" fill="#fff">4</text>
          </svg>
        </TaskButton>
        <TaskButton label="Word"><WordMark /></TaskButton>
        <TaskButton label="Excel" active><ExcelMark size={32} /></TaskButton>
        <TaskButton label="File Explorer">
          <svg width="34" height="32" viewBox="0 0 34 32" aria-hidden="true">
            <path d="M2 4l8-2 2 3h10l2-1 8 2v20H3z" fill="#f0c96b" stroke="#c79a3c" strokeWidth=".8" />
            <path d="M4 8h11l2 2h14v16H4z" fill="#fbe7a5" stroke="#d8ae52" strokeWidth=".8" />
            <path d="M5 3h4v2H5z" fill="#37a84a" />
            <path d="M13 6h5v2h-5z" fill="#d94b3a" />
            <path d="M23 8h5v2h-5z" fill="#3a8fd9" />
            <path d="M6 31V21c0-2 1-3 3-3h16c2 0 3 1 3 3v10h-5v-6H11v6z" fill="#9fd0f2" stroke="#5d9fd0" strokeWidth=".8" />
          </svg>
        </TaskButton>
      </div>
      <div className="relative ml-auto flex items-center">
        <Grip />
        <Btn label="Keyboard" className="ml-[9px] w-4">
          <svg width="15" height="13" viewBox="0 0 15 13" aria-hidden="true" fill="none" stroke="#d9dedc">
            <path d="M.5 4.500h14v8H.5zM4 3c2-3 5 1 8-3M2 6.500h11M2 8.500h11M3 10.500h9" />
            <path d="M3.500 5v6M6.500 5v6M9.500 5v6M12.500 5v6" stroke="#77857f" strokeWidth=".8" />
          </svg>
        </Btn>
        <Btn label="Show hidden icons" className="ml-[15px] w-2">
          <svg width="8" height="4" viewBox="0 0 8 4" aria-hidden="true"><path d="M4 0l4 4H0z" fill="#fff" /></svg>
        </Btn>
        <Btn label="Drive" className="ml-[9px] w-6">
          <svg width="16" height="14" viewBox="0 0 16 14" aria-hidden="true">
            <path d="M5.500 0L0 9l2.500 4.500L8 4.500z" fill="#1da362" />
            <path d="M5.500 0h5L16 9h-5.500z" fill="#ffcb4f" />
            <path d="M5 9h11l-2.500 4.500h-11z" fill="#4285f4" />
          </svg>
        </Btn>
        <Btn label="Action center" className="w-6">
          <svg width="17" height="16" viewBox="0 0 17 16" aria-hidden="true">
            <path d="M1 1h1.500v14H1zM3.500 2c3-2 5 2 10 0v7c-4 2-7-2-10 0z" fill="#fff" stroke="#555" strokeWidth=".5" />
            <circle cx="11.500" cy="10.500" r="5" fill="#d63a2f" />
            <path d="M9.500 8.500l4 4M13.500 8.500l-4 4" stroke="#fff" strokeWidth="1.600" />
          </svg>
        </Btn>
        <Btn label="Dropbox" className="w-6">
          <svg width="16" height="15" viewBox="0 0 16 15" aria-hidden="true">
            <path d="M5 0l3 2 3-2 4 3-3 2 3 3-4 2-3-2-3 2-4-2 3-3-3-2zM4 11l4-2 4 2-4 3z" fill="#f3f3f3" stroke="#555" strokeWidth=".5" />
            <circle cx="11.500" cy="10.500" r="4.300" fill="#2b7cd3" stroke="#fff" strokeWidth=".6" />
            <path d="M9.500 10h4v1.200h-4z" fill="#fff" />
          </svg>
        </Btn>
        <Btn label="Windows" className="w-6">
          <svg width="15" height="14" viewBox="0 0 15 14" aria-hidden="true" fill="#fff">
            <path d="M0 2l6-1v5.500H0zM7 .9L15 0v6.500H7zM0 7.500h6V13l-6-1zM7 7.500h8V14l-8-.9z" />
          </svg>
        </Btn>
        <Btn label="Volume" className="w-6">
          <svg width="13" height="13" viewBox="0 0 13 13" aria-hidden="true" fill="none" stroke="#fff">
            <path d="M0 4h3l4-4v13L3 9H0z" fill="#fff" stroke="none" />
            <path d="M9 4c1 2 1 3 0 5M11 2c2 3 2 6 0 9" />
          </svg>
        </Btn>
        <Btn label="Network" className="w-6">
          <svg width="15" height="12" viewBox="0 0 15 12" aria-hidden="true" fill="#fff">
            <path d="M0 10h2v2H0zM3 8h2v4H3zM6 6h2v6H6zM9 3h2v9H9zM12 0h2v12h-2z" />
          </svg>
        </Btn>
        <Btn label="OneDrive" className="w-6">
          <svg width="16" height="12" viewBox="0 0 16 12" aria-hidden="true">
            <path d="M2 8c-3-2 0-5 2-4 1-4 7-5 8-1L8 5 6 9z" fill="#fff" />
            <path d="M6 11c-2-2 0-4 2-4 1-3 5-2 5.500 0 3 0 3 4 0 4z" fill="#fff" stroke="#667f75" strokeWidth=".8" />
          </svg>
        </Btn>
        <div className="ml-[7px] w-[62px] text-center text-[12px] leading-[17px] text-white">
          <div>12:46 PM</div>
          <div>11/24/2015</div>
        </div>
        <button type="button" aria-label="Show desktop" className="ml-[6px] h-full w-[14px] border border-[#33453f] bg-linear-to-b from-white/35 to-white/15" />
      </div>

      <div className="absolute bottom-[38px] right-[182px] z-20 h-[55px] w-[264px] rounded-[7px] border border-black bg-linear-to-b from-white to-[#e8e8f0] shadow-[2px_2px_3px_rgba(0,0,0,0.4)]" role="status">
        <div className="flex pl-[11px] pt-[10px]">
          <svg width="16" height="17" viewBox="0 0 16 17" aria-hidden="true" fill="none" stroke="#777" className="shrink-0">
            <path d="M5 1l3 2 3-2 4 2v3l-2 1 2 2v3l-4 1-3 3-3-3-4-1V9l2-2-2-1V3zM3 7l5-3 5 3-5 4zM5 1v3M11 1v3M4 12l4-2 4 2M8 11v4" />
          </svg>
          <div className="ml-[5px] flex-1">
            <div className="flex h-[18px] items-center">
              <span className="text-[15px] text-[#003399]">Screenshot Added</span>
              <Btn label="Options" className="ml-auto">
                <svg width="11" height="11" viewBox="0 0 11 11" fill="none" aria-hidden="true" className="-mt-1">
                  <circle cx="3.500" cy="3.500" r="2.500" stroke="#8a8a8a" strokeWidth="2" />
                  <path d="M5 5l5 5" stroke="#8a8a8a" strokeWidth="2.500" />
                  <path d="M0 0h3v3z" fill="#fff" />
                </svg>
              </Btn>
              <Btn label="Close notification" className="ml-[9px] mr-[13px]">
                <svg width="9" height="9" viewBox="0 0 9 9" fill="none" stroke="#8a8a8a" strokeWidth="2" aria-hidden="true" className="-mt-1"><path d="M.5.500l8 8M8.500.500l-8 8" /></svg>
              </Btn>
            </div>
            <div className="whitespace-nowrap pt-px text-[11px] leading-[18px] text-black">A screenshot was added to your Dropbox.</div>
          </div>
        </div>
        <svg width="20" height="19" viewBox="0 0 20 19" className="absolute left-[230px] top-[52px]" aria-hidden="true">
          <path d="M1 0v1l16 16.500V0z" fill="#e9e9f0" />
          <path d="M1 1l16 16.500V1" fill="none" stroke="#000" />
        </svg>
      </div>
    </footer>
  );
}

export default function App() {
  return (
    <div className="flex min-h-screen flex-col bg-white font-['Open_Sans','Noto_Sans',sans-serif] text-[12px] leading-4">
      <TitleBar />
      <Ribbon />
      <FormulaBar />
      <Sheet />
      <SheetTabs />
      <StatusBar />
      <Taskbar />
    </div>
  );
}
